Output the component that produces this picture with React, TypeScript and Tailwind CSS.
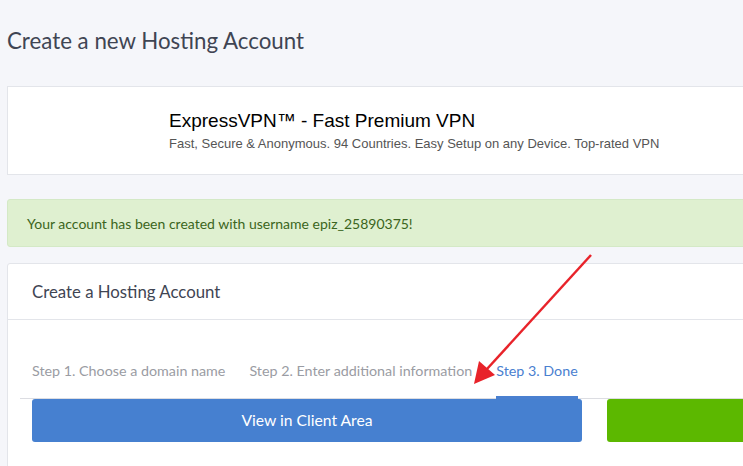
const STEPS = [
  { label: "Step 1. Choose a domain name", active: false },
  { label: "Step 2. Enter additional information", active: false },
  { label: "Step 3. Done", active: true },
];

export default function App() {
  return (
    <div className="relative h-[466px] w-[743px] overflow-hidden bg-[#f5f6fa] font-['Lato',sans-serif]">
      {/* Page title */}
      <h1 className="pl-[7px] pt-[26px] text-[22.3px] leading-[30px] text-[#3f4553]">
        Create a new Hosting Account
      </h1>

      {/* Ad banner */}
      <div className="ml-[7px] mt-[30px] flex h-[89px] w-[760px] flex-col justify-center border border-[#e3e5ea] bg-white pl-[161px] font-['Liberation_Sans',Arial,sans-serif]">
        <div className="text-[19px] leading-[22px] text-black">
          ExpressVPN™ - Fast Premium VPN
        </div>
        <div className="mt-[4px] text-[13px] leading-[16px] text-[#555]">
          Fast, Secure &amp; Anonymous. 94 Countries. Easy Setup on any Device. Top-rated VPN
        </div>
      </div>

      {/* Success alert */}
      <div className="ml-[7px] mt-[24px] flex h-[48px] w-[760px] items-center rounded-[3px] border border-[#d4e9c6] bg-[#dff0d0] pl-[19px] text-[14px] text-[#3b6520]">
        Your account has been created with username epiz_25890375!
      </div>

      {/* Hosting card */}
      <div className="ml-[7px] mt-[16px] w-[760px] rounded-[3px] border border-[#e3e5ea] bg-white pb-[40px]">
        <div className="flex h-[56px] items-center border-b border-[#e3e5ea] pl-[24px] text-[16.8px] text-[#3f4553]">
          Create a Hosting Account
        </div>
        <div className="pl-[12px] pt-[43px]">
          <div className="flex border-b border-[#dcdde2] pl-[12px]">
            {STEPS.map((step) => (
              <div
                key={step.label}
                className={
                  step.active
                    ? "-mb-px mr-[24px] border-b-[3px] border-[#4a80d0] pb-[16px] text-[14.3px] leading-[16px] text-[#4a80d0]"
                    : "mr-[24px] pb-[19px] text-[14.3px] leading-[16px] text-[#9a9ca3]"
                }
              >
                {step.label}
              </div>
            ))}
          </div>
          <div className="flex gap-[25px] pl-[12px]">
            <button className="h-[43px] w-[550px] shrink-0 rounded-[3px] bg-[#4680d0] text-[15.7px] text-white">
              View in Client Area
            </button>
            <button className="h-[43px] w-[200px] shrink-0 rounded-[3px] bg-[#5cb800] text-[15.7px] text-white" />
          </div>
        </div>
      </div>

      {/* Annotation arrow */}
      <svg className="absolute left-0 top-0" width="743" height="466">
        <line x1="591" y1="255" x2="487" y2="369" stroke="#e8232a" strokeWidth="2.5" />
        <polygon points="474,384 479,361 495,375" fill="#e8232a" />
      </svg>
    </div>
  );
}
